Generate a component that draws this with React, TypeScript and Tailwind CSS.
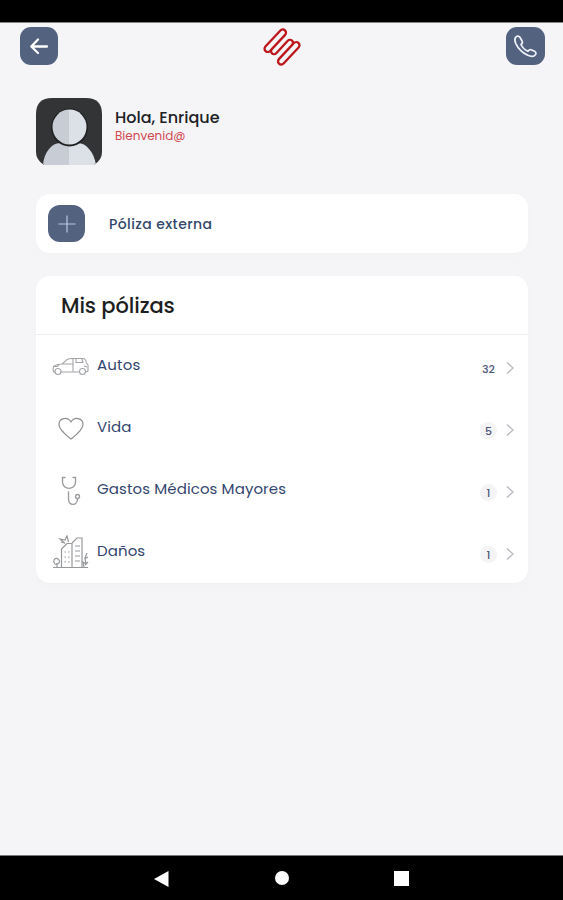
import type { ReactNode } from "react";

function ArrowLeftIcon() {
  return (
    <svg width="38" height="38" viewBox="0 0 38 38" fill="none" stroke="#fff" strokeWidth="2.3" strokeLinecap="round" strokeLinejoin="round">
      <path d="M27 19.5H11.5M18 12.5L11.3 19.5L18 26" />
    </svg>
  );
}

function PhoneIcon() {
  return (
    <svg width="39" height="38" viewBox="0 0 39 38" fill="none" stroke="#eef2f9" strokeWidth="1.7" strokeLinejoin="round">
      <path d="M9.500 10.500C10.700 8.800 12.800 8.600 13.900 10.300L16 13.800C16.800 15.300 16.500 16.500 15 17.500C16.500 20.700 18.800 23 22 24.300C23.100 22.700 24.300 22.200 25.700 22.900L29 24.600C30.500 25.700 30.200 27.300 28.500 28.600C27 29.700 24.500 29.500 21.800 28.300C16.300 25.700 12.200 21.600 9.800 16.600C8.700 14 8.400 12.100 9.500 10.500Z" />
    </svg>
  );
}

function Logo() {
  return (
    <svg width="38" height="42" viewBox="-19 -21 38 42" fill="none" stroke="#bd161b" strokeWidth="2.3" strokeLinecap="round" strokeLinejoin="round">
      <g transform="rotate(-47)">
        <path d="M-8.500 -6H11A3.200 3.200 0 0 0 11 -12.400H-11A3.200 3.200 0 0 0 -11 -6H-8.500A3 3 0 0 0 -8.500 0H8.500A3 3 0 0 1 8.500 6H11A3.200 3.200 0 0 1 11 12.400H-11A3.200 3.200 0 0 1 -11 6H8.500" />
      </g>
    </svg>
  );
}

function Avatar() {
  return (
    <svg width="66" height="67" viewBox="0 0 66 67" fill="none">
      <defs>
        <clipPath id="portrait"><path d="M16 0H50Q66 0 66 16V54Q66 62 58 67H8Q0 62 0 54V16Q0 0 16 0Z" /></clipPath>
        <linearGradient id="tone" gradientUnits="userSpaceOnUse" x1="0" x2="66" y1="0" y2="0"><stop offset="50%" stopColor="#c8ccd5" /><stop offset="50%" stopColor="#dce0e7" /></linearGradient>
      </defs>
      <g clipPath="url(#portrait)">
        <rect width="66" height="67" fill="#333435" />
        <path d="M7 67C8 54 16 45 24 45H42C50 45 58 54 60 67Z" fill="url(#tone)" />
        <ellipse cx="33.500" cy="29.500" rx="18.500" ry="19" fill="#202122" />
        <ellipse cx="33.500" cy="29" rx="17" ry="17.500" fill="url(#tone)" />
      </g>
    </svg>
  );
}

function CarIcon() {
  return (
    <svg width="37" height="19" viewBox="0 0 37 19" fill="none" stroke="#a3a5a8" strokeWidth="1.100" strokeLinejoin="round">
      <path d="M3 15H1.500Q.8 12 1.500 9.500Q4 7.400 10 7L15 2.600Q17 1.500 21 1.500H31Q33.500 1.500 34.500 6L36 8V14L34 15M9 15H27" />
      <path d="M10 7H21V2M21 7V14.500M24 2V5.500H31L30 2M2 9.500H5L7 8M32 9L35 10" />
      <circle cx="6" cy="14.500" r="3" /><circle cx="30.500" cy="14.500" r="3" />
    </svg>
  );
}

function HeartIcon() {
  return (
    <svg width="26" height="24" viewBox="0 0 26 24" fill="none" stroke="#8d8f92" strokeWidth="1.200" strokeLinejoin="round">
      <path d="M13 22C8 18 1 13 1 7.500C1 1 9.500-.8 13 5C16.500-.8 25 1 25 7.500C25 13 18 18 13 22Z" />
    </svg>
  );
}

function StethoscopeIcon() {
  return (
    <svg width="20" height="30" viewBox="0 0 20 30" fill="none" stroke="#999b9e" strokeWidth="1.350" strokeLinecap="round">
      <path d="M4 1.500H1.500V6C1.500 14.500 14.500 14.500 14.500 6V1.500H12M7.500 16V22.500C7.500 30.500 16.500 30 16.500 23" />
      <circle cx="16.500" cy="20.500" r="2" />
    </svg>
  );
}

function BuildingsIcon() {
  return (
    <svg width="36" height="35" viewBox="0 0 36 35" fill="none" stroke="#96989a" strokeWidth="1.200">
      <path d="M0 32.500H35M8.500 32V14L14 8.500H19V32M19 8L24 3H29V32" />
      <path d="M11.500 17H13M15 17H16.500M11.500 22H13M15 22H16.500M11.500 27H13M15 27H16.500M22 11H27M22 16H27M22 21H27M22 26H27" />
      <path d="M12 8.500L7 4L12 5L14 1L15.500 7M8 7L12 8M4 32V28M2 29C-1 25 3 21.500 5.500 24.500C8 27 5 30 2 29M31 32L30 27L33 29L32 23L34 18M31.500 24L35 22M32 30L35 27" />
    </svg>
  );
}

type Policy = { name: string; count: number; icon: ReactNode; tracking: string; badge: string };

const policies: Policy[] = [
  { name: "Autos", count: 32, icon: <CarIcon />, tracking: "tracking-[0.2px]", badge: "bg-[#fbfbfd]" },
  { name: "Vida", count: 5, icon: <HeartIcon />, tracking: "tracking-[0.1px]", badge: "bg-[#f4f4f6]" },
  { name: "Gastos Médicos Mayores", count: 1, icon: <StethoscopeIcon />, tracking: "tracking-[0.1px]", badge: "bg-[#f4f4f6]" },
  { name: "Daños", count: 1, icon: <BuildingsIcon />, tracking: "tracking-[0.1px]", badge: "bg-[#f4f4f6]" },
];

function PolicyRow({ policy }: { policy: Policy }) {
  return (
    <button className="flex h-[62px] w-full items-center pl-4 pr-[13px] text-left">
      <span className="flex w-[37px] shrink-0 justify-center pt-px">{policy.icon}</span>
      <span className={`ml-2 flex-1 pb-0.5 text-[15px] text-[#33466f] ${policy.tracking}`}>{policy.name}</span>
      <span className={`mt-[5px] flex size-[17px] items-center justify-center rounded-full pt-px text-[11px] font-medium text-[#4d5878] ${policy.badge}`}>{policy.count}</span>
      <svg className="ml-2 mt-[4px]" width="10" height="14" viewBox="0 0 10 14" fill="none" stroke="#b9bbc0" strokeWidth="1.300">
        <path d="M2 1.500L8 7L2 12.500" />
      </svg>
    </button>
  );
}

export default function App() {
  return (
    <div className="flex h-[900px] w-[563px] flex-col overflow-hidden bg-[#f5f5f8] font-['Poppins','Inter',sans-serif]">
      <div className="h-[23px] shrink-0 border-b border-[#858585] bg-black" />
      <header className="flex h-[47px] shrink-0 justify-between pl-5 pr-[18px] pt-1">
        <button className="size-[38px] rounded-[11px] bg-[#52627f]"><ArrowLeftIcon /></button>
        <div className="-mt-px"><Logo /></div>
        <button className="h-[38px] w-[39px] rounded-[11px] bg-[#52627f]"><PhoneIcon /></button>
      </header>
      <main className="flex-1 px-9 pt-7">
        <section className="flex h-[67px] gap-[13px]">
          <Avatar />
          <div className="pt-[8px]">
            <h1 className="text-[16px] font-medium leading-[24px] text-[#202125]">Hola, Enrique</h1>
            <p className="text-[12px] leading-[12px] text-[#d14a50]">Bienvenid@</p>
          </div>
        </section>
        <button className="mt-[29px] flex h-[59px] w-[492px] items-center rounded-[14px] bg-white pl-3 shadow-[0_2px_10px_rgba(0,0,0,0.015)]">
          <span className="flex size-[37px] items-center justify-center rounded-[12px] bg-[#52627f]">
            <svg width="18" height="18" viewBox="0 0 18 18" stroke="#bbc9df" strokeWidth="1.200"><path d="M9 .5V17.500M.5 9H17.500" /></svg>
          </span>
          <span className="ml-6 pt-0.5 text-[14px] font-medium tracking-[0.4px] text-[#34466b]">Póliza externa</span>
        </button>
        <section className="mt-[23px] h-[307px] w-[492px] rounded-[14px] bg-white shadow-[0_3px_10px_rgba(0,0,0,0.02)]">
          <h2 className="flex h-[59px] items-center border-b border-[#eeeef0] pl-[25px] pt-px text-[21px] font-medium tracking-[-0.1px] text-[#1d1e22]">Mis pólizas</h2>
          {policies.map((policy) => <PolicyRow key={policy.name} policy={policy} />)}
        </section>
      </main>
      <nav className="flex h-[45px] shrink-0 justify-between border-t border-[#777] bg-black pl-[154px] pr-[154px] pt-[15px]">
        <svg width="16" height="16" viewBox="0 0 16 16" fill="#fff"><path d="M0 8L14.500 0V16Z" /></svg>
        <span className="size-3.5 rounded-full bg-white" />
        <span className="size-[15px] bg-white" />
      </nav>
    </div>
  );
}
